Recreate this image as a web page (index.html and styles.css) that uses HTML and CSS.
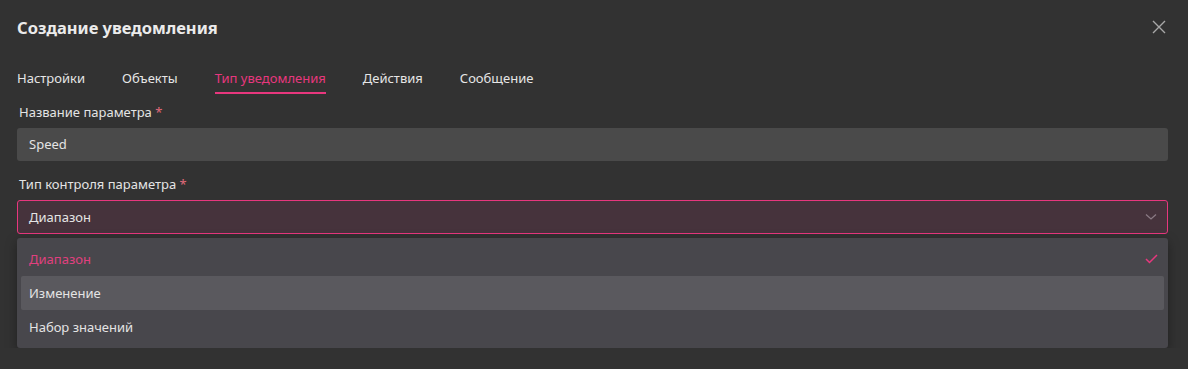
FILE: index.html
```html
<!DOCTYPE html>
<html lang="ru">
<head>
    <meta charset="UTF-8">
    <title>Создание уведомления</title>
    <link rel="stylesheet" href="styles.css">
</head>
<body>
    <div class="modal">
        <div class="modal-header">
            <h2 class="modal-title">Создание уведомления</h2>
            <button class="close-btn" aria-label="Закрыть">
                <svg width="14" height="14" viewBox="0 0 14 14"><path d="M1 1L13 13M13 1L1 13" stroke="#a8a8a8" stroke-width="1.4" fill="none"/></svg>
            </button>
        </div>
        <div class="tabs">
            <div class="tab">Настройки</div>
            <div class="tab">Объекты</div>
            <div class="tab active">Тип уведомления</div>
            <div class="tab">Действия</div>
            <div class="tab">Сообщение</div>
        </div>
        <div class="field">
            <label class="field-label">Название параметра <span class="req">*</span></label>
            <div class="input">Speed</div>
        </div>
        <div class="field">
            <label class="field-label">Тип контроля параметра <span class="req">*</span></label>
            <div class="select">
                <span>Диапазон</span>
                <svg width="12" height="8" viewBox="0 0 12 8"><path d="M1 1.5L6 6L11 1.5" stroke="#8a7a84" stroke-width="1.3" fill="none"/></svg>
            </div>
            <div class="dropdown">
                <div class="option selected">
                    <span>Диапазон</span>
                    <svg width="13" height="10" viewBox="0 0 13 10"><path d="M1 5L4.5 8.5L12 1" stroke="#e8377e" stroke-width="1.5" fill="none"/></svg>
                </div>
                <div class="option hovered">Изменение</div>
                <div class="option">Набор значений</div>
            </div>
        </div>
    </div>
</body>
</html>
```

FILE: styles.css
```css
body {
    margin: 0;
    background-color: #323232;
    font-family: "Noto Sans", "Open Sans", sans-serif;
    color: #e4e4e4;
}
.modal {
    padding: 0 20px 0 17px;
}
.modal-header {
    display: flex;
    justify-content: space-between;
    align-items: center;
    height: 54px;
}
.modal-title {
    margin: 0;
    font-size: 16.5px;
    font-weight: 700;
    color: #ebebeb;
}
.close-btn {
    background: none;
    border: none;
    padding: 0;
    margin-right: 2px;
    width: 14px;
    height: 14px;
    cursor: pointer;
}
.tabs {
    display: flex;
    gap: 37px;
    margin-top: 10px;
    height: 30px;
}
.tab {
    font-size: 13px;
    line-height: 28px;
    color: #e6e6e6;
    border-bottom: 2px solid transparent;
}
.tab.active {
    color: #e8377e;
    border-bottom-color: #e8377e;
}
.field {
    margin-top: 8px;
}
.field + .field {
    margin-top: 13px;
}
.field-label {
    display: block;
    font-size: 13px;
    line-height: 20px;
    padding-left: 2px;
    margin-bottom: 6px;
    color: #e4e4e4;
}
.req {
    color: #e06a7a;
}
.input {
    height: 33px;
    line-height: 33px;
    padding: 0 12px;
    background-color: #4a4a4a;
    border-radius: 3px;
    font-size: 13px;
}
.select {
    display: flex;
    justify-content: space-between;
    align-items: center;
    height: 32px;
    padding: 0 10px 0 11px;
    background-color: #46333c;
    border: 1px solid #e8377e;
    border-radius: 3px;
    font-size: 13px;
}
.dropdown {
    margin-top: 4px;
    padding: 4px 4px 4px;
    background-color: #48474c;
    border-radius: 3px;
    box-shadow: 0 4px 12px rgba(0, 0, 0, 0.35);
}
.option {
    display: flex;
    justify-content: space-between;
    align-items: center;
    height: 34px;
    padding: 0 6px 0 8px;
    border-radius: 2px;
    font-size: 13px;
    color: #e4e4e4;
}
.option.selected {
    color: #e0407f;
}
.option.hovered {
    background-color: #5a595e;
}
```
